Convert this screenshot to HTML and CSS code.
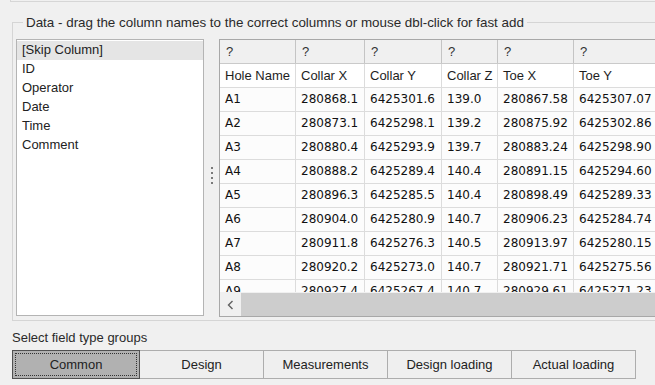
FILE: index.html
```html
<!DOCTYPE html>
<html>
<head>
<meta charset="utf-8">
<link rel="stylesheet" href="styles.css">
</head>
<body>
<div class="topline"></div>
<fieldset class="group">
  <legend>Data - drag the column names to the correct columns or mouse dbl-click for fast add</legend>
  <div class="content">
    <ul class="list">
      <li class="sel">[Skip Column]</li>
      <li>ID</li>
      <li>Operator</li>
      <li>Date</li>
      <li>Time</li>
      <li>Comment</li>
    </ul>
    <div class="splitter"><span class="grip"></span></div>
    <div class="grid">
      <div class="rows">
        <div class="row head"><span>?</span><span>?</span><span>?</span><span>?</span><span>?</span><span>?</span></div>
        <div class="row names"><span>Hole Name</span><span>Collar X</span><span>Collar Y</span><span>Collar Z</span><span>Toe X</span><span>Toe Y</span></div>
        <div class="row data"><span>A1</span><span>280868.1</span><span>6425301.6</span><span>139.0</span><span>280867.58</span><span>6425307.07</span></div>
        <div class="row data"><span>A2</span><span>280873.1</span><span>6425298.1</span><span>139.2</span><span>280875.92</span><span>6425302.86</span></div>
        <div class="row data"><span>A3</span><span>280880.4</span><span>6425293.9</span><span>139.7</span><span>280883.24</span><span>6425298.90</span></div>
        <div class="row data"><span>A4</span><span>280888.2</span><span>6425289.4</span><span>140.4</span><span>280891.15</span><span>6425294.60</span></div>
        <div class="row data"><span>A5</span><span>280896.3</span><span>6425285.5</span><span>140.4</span><span>280898.49</span><span>6425289.33</span></div>
        <div class="row data"><span>A6</span><span>280904.0</span><span>6425280.9</span><span>140.7</span><span>280906.23</span><span>6425284.74</span></div>
        <div class="row data"><span>A7</span><span>280911.8</span><span>6425276.3</span><span>140.5</span><span>280913.97</span><span>6425280.15</span></div>
        <div class="row data"><span>A8</span><span>280920.2</span><span>6425273.0</span><span>140.7</span><span>280921.71</span><span>6425275.56</span></div>
        <div class="row data"><span>A9</span><span>280927.4</span><span>6425267.4</span><span>140.7</span><span>280929.61</span><span>6425271.23</span></div>
      </div>
      <div class="hscroll">
        <div class="arrow"><svg width="7" height="10" viewBox="0 0 7 10"><polyline points="5.5,1 1.5,5 5.5,9" fill="none" stroke="#606060" stroke-width="1.4"/></svg></div>
        <div class="thumb"></div>
      </div>
    </div>
  </div>
</fieldset>
<div class="groups-label">Select field type groups</div>
<div class="btngroup">
  <div class="btn pressed">Common</div>
  <div class="btn">Design</div>
  <div class="btn">Measurements</div>
  <div class="btn">Design loading</div>
  <div class="btn">Actual loading</div>
</div>
</body>
</html>
```

FILE: styles.css
```css
html, body {
  margin: 0;
  padding: 0;
}
body {
  width: 655px;
  height: 385px;
  overflow: hidden;
  background: #f0f0f0;
  font-family: "Liberation Sans", Arial, sans-serif;
  font-size: 13px;
  color: #1e1e1e;
}
.topline {
  height: 1px;
  margin-left: 10px;
  border-left: 1px solid #d6d6d6;
  border-bottom: 1px solid #d6d6d6;
}
.group {
  margin: 13px 0 0 12px;
  padding: 9px 0 3px 3px;
  width: 700px;
  min-width: 0;
  box-sizing: border-box;
  border: 1px solid #d5d5d5;
}
.group legend {
  margin-left: 7px;
  padding: 0 3px;
  line-height: 15px;
  font-size: 13.4px;
  color: #2a2a2a;
}
.content {
  display: flex;
  align-items: flex-start;
}
.list {
  margin: 0;
  padding: 1px 0 0 0;
  list-style: none;
  width: 188px;
  height: 277px;
  box-sizing: border-box;
  background: #ffffff;
  border: 1px solid #b4b4b4;
}
.list li {
  height: 19px;
  line-height: 18px;
  padding-left: 5px;
  color: #222;
}
.list li.sel {
  background: #e5e5e5;
}
.splitter {
  width: 15px;
  height: 277px;
  display: flex;
  align-items: center;
  justify-content: center;
}
.grip {
  width: 2px;
  height: 18px;
  margin-left: 1px;
  margin-top: -4px;
  background: radial-gradient(circle at 1px 1px, #7a7a7a 0.9px, transparent 1.2px) 0 0 / 2px 5px repeat-y;
}
.grid {
  flex: 1;
  height: 278px;
  box-sizing: border-box;
  border: 1px solid #a8a8a8;
  border-right: none;
  display: flex;
  flex-direction: column;
  overflow: hidden;
  background: #ffffff;
}
.rows {
  flex: 1;
  overflow: hidden;
}
.row {
  display: grid;
  grid-template-columns: 76px 69px 77px 56px 76px 120px;
  height: 24px;
  box-sizing: border-box;
  border-bottom: 1px solid #dcdcdc;
}
.row span {
  border-right: 1px solid #dcdcdc;
  padding-left: 5px;
  line-height: 23px;
  white-space: nowrap;
  overflow: hidden;
}
.row.head {
  background: #f0f0f0;
  border-bottom-color: #cacaca;
}
.row.head span {
  border-right-color: #c4c4c4;
  padding-left: 6px;
  color: #333;
}
.row.names {
  background: #ffffff;
}
.row.data {
  background: #fcfcfc;
  font-family: "DejaVu Sans", Verdana, sans-serif;
  font-size: 12px;
  color: #111;
}
.hscroll {
  height: 23px;
  display: flex;
  background: #cdcdcd;
  border-top: 1px solid #f0f0f0;
}
.arrow {
  width: 21px;
  background: #f0f0f0;
  display: flex;
  align-items: center;
  justify-content: center;
}
.thumb {
  flex: 1;
  background: #cdcdcd;
}
.groups-label {
  margin: 9px 0 0 12px;
  line-height: 16px;
  color: #2a2a2a;
}
.btngroup {
  display: flex;
  width: 624px;
  margin: 4px 0 0 12px;
}
.btn {
  flex: 1;
  height: 29px;
  box-sizing: border-box;
  border: 1px solid #adadad;
  margin-left: -1px;
  background: #efefef;
  text-align: center;
  line-height: 27px;
  color: #222;
}
.btn:first-child {
  margin-left: 0;
  flex: 0 0 128px;
}
.btn.pressed {
  background: #b1b1b1;
  border-color: #505050;
  outline: 1px dotted #333;
  outline-offset: -4px;
  position: relative;
}
```
